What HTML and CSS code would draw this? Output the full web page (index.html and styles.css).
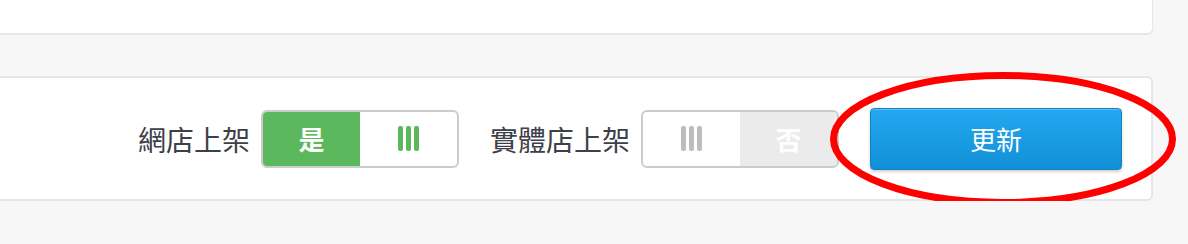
FILE: index.html
```html
<!DOCTYPE html>
<html lang="zh-Hant">
<head>
    <meta charset="UTF-8">
    <meta name="viewport" content="width=device-width, initial-scale=1.0">
    <title>商品上架</title>
    <link rel="stylesheet" href="styles.css">
</head>
<body>
    <div class="page">
        <div class="top-card"></div>
        <div class="panel">
            <span class="field-label">網店上架</span>
            <div class="switch switch-on">
                <span class="switch-half on-label">是</span>
                <span class="switch-half grip"><i></i><i></i><i></i></span>
            </div>
            <span class="field-label label-gap">實體店上架</span>
            <div class="switch switch-off">
                <span class="switch-half grip"><i></i><i></i><i></i></span>
                <span class="switch-half off-label">否</span>
            </div>
            <button class="btn-update">更新</button>
        </div>
        <svg class="mark" width="360" height="150" viewBox="0 0 360 150">
            <ellipse cx="173" cy="67" rx="169.5" ry="63.5" fill="none" stroke="#ff0000" stroke-width="7"/>
        </svg>
    </div>
</body>
</html>
```

FILE: styles.css
```css
body {
    margin: 0;
    background-color: #f7f7f7;
    font-family: "Liberation Sans", "Noto Sans CJK TC", sans-serif;
}

.page {
    position: relative;
    padding-right: 35px;
}

.top-card {
    height: 33px;
    background-color: #fff;
    border-bottom: 2px solid #e6e6e6;
    border-right: 1px solid #e6e6e6;
    border-bottom-right-radius: 6px;
}

.panel {
    margin-top: 41px;
    height: 121px;
    background-color: #fff;
    border: 2px solid #e6e6e6;
    border-left: none;
    border-radius: 0 6px 6px 0;
    display: flex;
    justify-content: flex-end;
    align-items: center;
    padding-right: 29px;
}

.field-label {
    font-size: 28px;
    color: #3d4049;
    margin-right: 11px;
}

.label-gap {
    margin-left: 31px;
}

.switch {
    display: flex;
    width: 194px;
    height: 54px;
    border: 2px solid #cccccc;
    border-radius: 6px;
    overflow: hidden;
    background-color: #fff;
}

.switch-half {
    flex: 1;
    display: flex;
    justify-content: center;
    align-items: center;
    font-size: 26px;
    font-weight: bold;
    color: #fff;
}

.on-label {
    background-color: #5cb85c;
}

.off-label {
    background-color: #ebebeb;
}

.grip {
    gap: 3px;
}

.grip i {
    display: block;
    width: 5px;
    height: 25px;
    border-radius: 2px;
    background-color: #5cb85c;
}

.switch-off .grip i {
    background-color: #bdbdbd;
}

.btn-update {
    margin-left: 31px;
    width: 252px;
    height: 62px;
    border: 1px solid #1581c4;
    border-radius: 4px;
    background: linear-gradient(to bottom, #23a8ef, #1190d6);
    box-shadow: inset 0 1px 0 rgba(255, 255, 255, 0.25), 0 2px 3px rgba(0, 0, 0, 0.18);
    color: #fff;
    font-family: "Liberation Sans", "Noto Sans CJK TC", sans-serif;
    font-size: 26px;
    cursor: pointer;
}

.mark {
    position: absolute;
    left: 830px;
    top: 72px;
}
```
